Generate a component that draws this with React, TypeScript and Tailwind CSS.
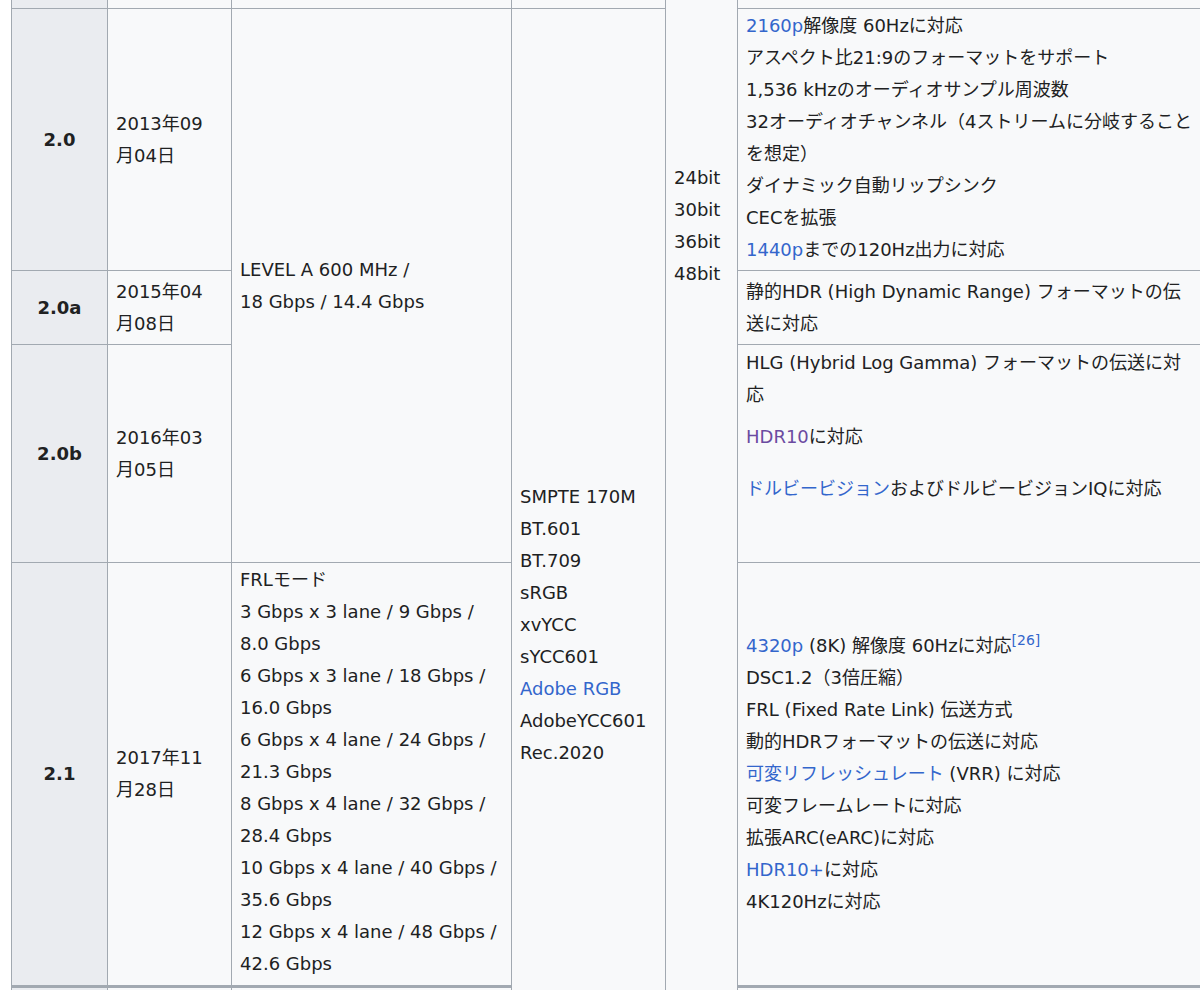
import React from 'react'

const A = ({ children, v }: { children: React.ReactNode; v?: boolean }) => (
  <span className={v ? 'text-[#6b4ba1]' : 'text-[#3366cc]'}>{children}</span>
)

const cell = 'bg-[#f8f9fa] px-[8px] text-[#202122]'
const head = 'bg-[#eaecf0] flex items-center justify-center font-bold text-[#202122]'

export default function App() {
  return (
    <div
      className="h-[990px] w-[1200px] overflow-hidden bg-white pl-[11px] text-[18px] leading-[32px]"
      style={{ fontFamily: '"DejaVu Sans", "Noto Sans CJK JP", sans-serif' }}
    >
      <div className="grid h-[1100px] grid-cols-[95px_123px_279px_153px_71px_500px] grid-rows-[8px_261px_73px_217px_422px_120px] gap-px border-l border-[#a2a9b1] bg-[#a2a9b1]">
        {/* top partial row */}
        <div className="col-start-1 row-start-1 bg-[#eaecf0]" />
        <div className="col-start-2 row-start-1 bg-[#f8f9fa]" />
        <div className="col-start-3 row-start-1 bg-[#f8f9fa]" />
        <div className="col-start-4 row-start-1 bg-[#f8f9fa]" />
        <div className="col-start-6 row-start-1 bg-[#f8f9fa]" />

        {/* spanning cells */}
        <div className={`${cell} col-start-3 row-start-2 row-span-3 flex flex-col justify-center`}>
          <div>LEVEL A 600 MHz /</div>
          <div>18 Gbps / 14.4 Gbps</div>
        </div>
        <div className={`${cell} col-start-4 row-start-2 row-span-5 pt-[472px]`}>
          <div>SMPTE 170M</div>
          <div>BT.601</div>
          <div>BT.709</div>
          <div>sRGB</div>
          <div>xvYCC</div>
          <div>sYCC601</div>
          <div><A>Adobe RGB</A></div>
          <div>AdobeYCC601</div>
          <div>Rec.2020</div>
        </div>
        <div className={`${cell} col-start-5 row-start-1 row-span-6 pt-[162px]`}>
          <div>24bit</div>
          <div>30bit</div>
          <div>36bit</div>
          <div>48bit</div>
        </div>

        {/* 2.0 */}
        <div className={`${head} col-start-1 row-start-2`}>2.0</div>
        <div className={`${cell} col-start-2 row-start-2 flex flex-col justify-center`}>
          <div>2013年09</div>
          <div>月04日</div>
        </div>
        <div className={`${cell} col-start-6 row-start-2 pt-[1px] pr-[40px]`}>
          <div><A>2160p</A>解像度 60Hzに対応</div>
          <div>アスペクト比21:9のフォーマットをサポート</div>
          <div>1,536 kHzのオーディオサンプル周波数</div>
          <div>32オーディオチャンネル（4ストリームに分岐することを想定）</div>
          <div>ダイナミック自動リップシンク</div>
          <div>CECを拡張</div>
          <div><A>1440p</A>までの120Hz出力に対応</div>
        </div>

        {/* 2.0a */}
        <div className={`${head} col-start-1 row-start-3`}>2.0a</div>
        <div className={`${cell} col-start-2 row-start-3 flex flex-col justify-center`}>
          <div>2015年04</div>
          <div>月08日</div>
        </div>
        <div className={`${cell} col-start-6 row-start-3 flex flex-col justify-center pr-[40px]`}>
          <div>静的HDR (High Dynamic Range) フォーマットの伝送に対応</div>
        </div>

        {/* 2.0b */}
        <div className={`${head} col-start-1 row-start-4`}>2.0b</div>
        <div className={`${cell} col-start-2 row-start-4 flex flex-col justify-center`}>
          <div>2016年03</div>
          <div>月05日</div>
        </div>
        <div className={`${cell} col-start-6 row-start-4 pt-[2px] pr-[40px]`}>
          <div>HLG (Hybrid Log Gamma) フォーマットの伝送に対応</div>
          <div className="mt-[10px]"><A v>HDR10</A>に対応</div>
          <div className="mt-[20px]"><A>ドルビービジョン</A>およびドルビービジョンIQに対応</div>
        </div>

        {/* 2.1 */}
        <div className={`${head} col-start-1 row-start-5`}>2.1</div>
        <div className={`${cell} col-start-2 row-start-5 flex flex-col justify-center`}>
          <div>2017年11</div>
          <div>月28日</div>
        </div>
        <div className={`${cell} col-start-3 row-start-5 pt-[1px]`}>
          <div>FRLモード</div>
          <div>3 Gbps x 3 lane / 9 Gbps / 8.0 Gbps</div>
          <div>6 Gbps x 3 lane / 18 Gbps / 16.0 Gbps</div>
          <div>6 Gbps x 4 lane / 24 Gbps / 21.3 Gbps</div>
          <div>8 Gbps x 4 lane / 32 Gbps / 28.4 Gbps</div>
          <div>10 Gbps x 4 lane / 40 Gbps / 35.6 Gbps</div>
          <div>12 Gbps x 4 lane / 48 Gbps / 42.6 Gbps</div>
        </div>
        <div className={`${cell} col-start-6 row-start-5 flex flex-col justify-center pr-[40px]`}>
          <div>
            <A>4320p</A> (8K) 解像度 60Hzに対応
            <sup className="text-[14px] text-[#3366cc]">[26]</sup>
          </div>
          <div>DSC1.2（3倍圧縮）</div>
          <div>FRL (Fixed Rate Link) 伝送方式</div>
          <div>動的HDRフォーマットの伝送に対応</div>
          <div><A>可変リフレッシュレート</A> (VRR) に対応</div>
          <div>可変フレームレートに対応</div>
          <div>拡張ARC(eARC)に対応</div>
          <div><A>HDR10+</A>に対応</div>
          <div>4K120Hzに対応</div>
        </div>

        {/* bottom partial row */}
        <div className="col-start-1 row-start-6 border-t-2 border-[#a2a9b1] bg-[#eaecf0]" />
        <div className="col-start-2 row-start-6 border-t-2 border-[#a2a9b1] bg-[#f8f9fa]" />
        <div className="col-start-3 row-start-6 border-t-2 border-[#a2a9b1] bg-[#f8f9fa]" />
        <div className="col-start-6 row-start-6 border-t-2 border-[#a2a9b1] bg-[#f8f9fa]" />
      </div>
    </div>
  )
}
